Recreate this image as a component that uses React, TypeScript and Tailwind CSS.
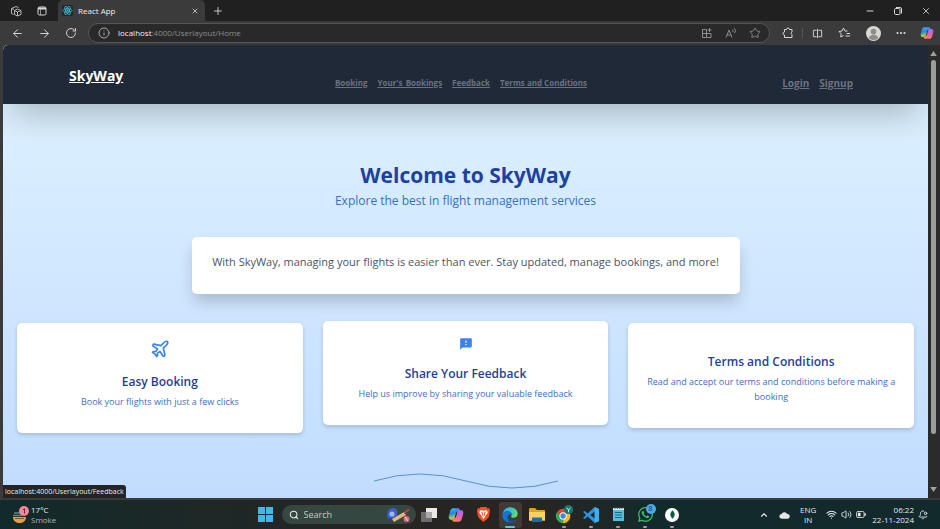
import React from "react";
import type { ReactNode } from "react";
import {
  ArrowLeft,
  ArrowRight,
  BellDot,
  ChevronUp,
  Ellipsis,
  Info,
  Minus,
  Plane,
  Plus,
  RotateCw,
  Search,
  Star,
  Volume2,
  Wifi,
  X,
} from "lucide-react";
import { MdFeedback } from "react-icons/md";
import { FaWhatsapp } from "react-icons/fa";

function IconButton({ label, children, className = "" }: { label: string; children: ReactNode; className?: string }) {
  return (
    <button type="button" aria-label={label} className={`flex shrink-0 items-center justify-center ${className}`}>
      {children}
    </button>
  );
}

function CopilotLogo({ id, className }: { id: string; className: string }) {
  return (
    <svg viewBox="0 0 24 24" className={className} aria-hidden="true">
      <defs>
        <linearGradient id={`${id}-a`} x1="0" y1="0" x2="0.3" y2="1">
          <stop offset="0" stopColor="#35c1f1" />
          <stop offset="0.5" stopColor="#2f7df0" />
          <stop offset="0.75" stopColor="#6bc46a" />
          <stop offset="1" stopColor="#f2c73c" />
        </linearGradient>
        <linearGradient id={`${id}-b`} x1="0.6" y1="0" x2="0.3" y2="1">
          <stop offset="0" stopColor="#a86bf0" />
          <stop offset="0.5" stopColor="#e85fb0" />
          <stop offset="1" stopColor="#f58a4c" />
        </linearGradient>
      </defs>
      <path d="M8 2h7c1.500 0 2.300 1 2.700 2.400L18.300 7H15c-2 0-2.800 1.200-3.300 3l-1.700 6c-.6 2-1.500 3-3.200 3H4.500C1 19 .6 16 1.500 12.500l1.800-6.300C4.200 3.300 5.600 2 8 2z" fill={`url(#${id}-a)`} />
      <path d="M16 22H9c-1.500 0-2.300-1-2.700-2.400L5.700 17H9c2 0 2.800-1.200 3.300-3L14 8c.6-2 1.500-3 3.200-3h2.300c3.500 0 3.900 3 3 6.500l-1.800 6.300C19.800 20.700 18.400 22 16 22z" fill={`url(#${id}-b)`} />
    </svg>
  );
}

function ReactLogo() {
  return (
    <svg viewBox="0 0 24 24" className="size-[11px] shrink-0" aria-hidden="true">
      <rect width="24" height="24" rx="4" fill="#1d2b33" />
      <g fill="none" stroke="#4fb9d6" strokeWidth="1.600">
        <ellipse cx="12" cy="12" rx="10" ry="4" />
        <ellipse cx="12" cy="12" rx="10" ry="4" transform="rotate(60 12 12)" />
        <ellipse cx="12" cy="12" rx="10" ry="4" transform="rotate(120 12 12)" />
      </g>
      <circle cx="12" cy="12" r="2.400" fill="#4fb9d6" />
    </svg>
  );
}

function TabStrip() {
  return (
    <header className="flex h-[21px] shrink-0 bg-[#202020] text-[#d6d6d6]">
      <div className="flex w-[58px] items-center gap-[15px] pl-[10px]">
        <IconButton label="Workspaces">
          <svg viewBox="0 0 12 12" className="size-[12px]" fill="none" stroke="#b4b4b4" strokeLinejoin="round" aria-hidden="true">
            <path d="M3.500 9.500 1.500 8.500V3.500L6 1.500l2.500 1M1.500 3.500 4 4.500M4.500 5.500 7.500 4l3.500 1.500v4L7.500 11l-3-1.500zM4.500 5.500l3 1.500L11 5.500M7.500 7v4" />
          </svg>
        </IconButton>
        <IconButton label="Tab actions">
          <svg viewBox="0 0 10 10" className="size-[10px]" fill="none" stroke="currentColor" aria-hidden="true">
            <rect x="1" y="1" width="8" height="8" rx="1.500" />
            <path d="M1 2.500h8" strokeWidth="2" />
            <path d="M3.500 3v6" strokeOpacity=".6" />
          </svg>
        </IconButton>
      </div>
      <div className="flex w-[147px] items-center rounded-t-[5px] bg-[#3b3b3b] pr-[6px] pl-[4px]">
        <ReactLogo />
        <span className="ml-[5px] flex-1 text-[8px] text-[#efefef]">React App</span>
        <IconButton label="Close tab"><X className="size-[8px]" strokeWidth={2.4} /></IconButton>
      </div>
      <IconButton label="New tab" className="ml-[7px]"><Plus className="size-[12px]" strokeWidth={1.8} /></IconButton>
      <div className="ml-auto flex items-center gap-[18px] pr-[9px]">
        <IconButton label="Minimize"><Minus className="size-[10px]" strokeWidth={2.4} /></IconButton>
        <IconButton label="Restore">
          <svg viewBox="0 0 10 10" className="size-[10px]" fill="none" stroke="currentColor" aria-hidden="true">
            <rect x="1.500" y="2.500" width="5.500" height="6" rx="1.200" />
            <path d="M3 1.500h4q1.500 0 1.500 1.500v4.500" />
          </svg>
        </IconButton>
        <IconButton label="Close window"><X className="size-[10px]" strokeWidth={2} /></IconButton>
      </div>
    </header>
  );
}

function Toolbar() {
  return (
    <div className="flex h-[24px] shrink-0 items-center bg-[#3b3b3b] text-[#d6d6d6]">
      <div className="flex w-[88px] shrink-0 items-center gap-[14px] pl-[11px]">
        <IconButton label="Back"><ArrowLeft className="size-[13px]" strokeWidth={1.8} /></IconButton>
        <IconButton label="Forward"><ArrowRight className="size-[13px]" strokeWidth={1.8} /></IconButton>
        <IconButton label="Refresh"><RotateCw className="size-[12px]" strokeWidth={1.9} /></IconButton>
      </div>
      <div className="flex h-[20px] flex-1 items-center rounded-full border border-[#565656] bg-[#292929] pr-[8px] pl-[9px] text-[#8d8d8d]">
        <Info className="size-[12px] text-[#b5b5b5]" strokeWidth={1.8} />
        <div className="ml-[8px] flex-1 text-[8px] leading-[12px]"><span className="text-[#f0f0f0]">localhost</span>:4000/Userlayout/Home</div>
        <div className="flex items-center gap-[12px]">
          <IconButton label="App available">
            <svg viewBox="0 0 12 12" className="size-[12px]" fill="none" stroke="currentColor" aria-hidden="true">
              <path d="M1.500 2.500h4v8h-4zM1.500 6.500h8.500v4H5.500M8.500 1v4M6.500 3h4" />
            </svg>
          </IconButton>
          <IconButton label="Read aloud">
            <svg viewBox="0 0 12 12" className="size-[12px]" fill="none" stroke="currentColor" aria-hidden="true">
              <path d="M1 10.500 4 3l3 7.500M2 8h4M7.500 2.500c.7.700.7 1.800 0 2.500M9.300 1.200c1.400 1.400 1.400 3.600 0 5" />
            </svg>
          </IconButton>
          <IconButton label="Add to favorites"><Star className="size-[12px]" strokeWidth={1.8} /></IconButton>
        </div>
      </div>
      <div className="flex shrink-0 items-center pr-px pl-[4px]">
        <IconButton label="Extensions" className="w-[28px]">
          <svg viewBox="0 0 12 12" className="size-[12px]" fill="none" stroke="currentColor" strokeLinejoin="round" aria-hidden="true">
            <path d="M2.500 2.500h2a1.500 1.500 0 0 1 3 0h2.500v2.500a1.400 1.400 0 0 0 0 2.500v3H2.500V8a1.400 1.400 0 0 1 0-3z" />
          </svg>
        </IconButton>
        <span className="h-[10px] w-px bg-[#555]" />
        <IconButton label="Split screen" className="w-[28px]">
          <svg viewBox="0 0 12 12" className="size-[11px]" fill="none" stroke="currentColor" aria-hidden="true">
            <path d="M5 2.500H1.500v7H5M7 2.500h3.500v7H7M6 1v10" />
          </svg>
        </IconButton>
        <IconButton label="Favorites" className="w-[28px]">
          <svg viewBox="0 0 14 12" className="h-[12px] w-[14px]" fill="none" stroke="currentColor" strokeLinejoin="round" aria-hidden="true">
            <path d="M9.500 4 7 4 5.500 1 4 4 1 4.500l2.200 2.200L2.700 10l2.800-1.500M8.500 6.500H12M7.500 9H12" />
          </svg>
        </IconButton>
        <IconButton label="Profile" className="w-[28px]">
          <svg viewBox="0 0 16 16" className="size-[15px]" aria-hidden="true">
            <circle cx="8" cy="8" r="8" fill="#d9d8d4" />
            <circle cx="8" cy="6" r="3" fill="#8e8d89" />
            <path d="M3 13c0-5 10-5 10 0-3 2.500-7 2.500-10 0z" fill="#8e8d89" />
          </svg>
        </IconButton>
        <IconButton label="Settings and more" className="w-[28px]"><Ellipsis className="size-[12px]" strokeWidth={2.4} /></IconButton>
        <IconButton label="Copilot" className="w-[24px]"><CopilotLogo id="sidebar" className="size-[14px]" /></IconButton>
      </div>
    </div>
  );
}

function SiteNav() {
  return (
    <nav className="relative grid h-[59px] shrink-0 grid-cols-[1fr_auto_1fr] items-center rounded-tl-[5px] bg-[#1f2937] pr-[75px] pl-[66px] font-bold text-gray-500 shadow-[0_17px_34px_-8px_rgba(0,0,0,0.25)]">
      <a href="#home" className="justify-self-start pt-[3px] text-[14px] leading-[18px] font-bold text-white underline">SkyWay</a>
      <div className="flex gap-[10px] pt-[16px] text-[8px] leading-[12px]">
        <a href="#booking" className="underline">Booking</a>
        <a href="#bookings" className="underline">Your's_Bookings</a>
        <a href="#feedback" className="underline">Feedback</a>
        <a href="#terms" className="underline">Terms and Conditions</a>
      </div>
      <div className="flex gap-[10px] justify-self-end pt-[16px] text-[10px] leading-[12px]">
        <a href="#login" className="underline">Login</a>
        <a href="#signup" className="underline">Signup</a>
      </div>
    </nav>
  );
}

function FeatureCard({ title, text, icon, lifted = false }: { title: string; text: string; icon?: ReactNode; lifted?: boolean }) {
  return (
    <article className={`flex-1 rounded-[5px] bg-white px-[14px] pt-[16px] pb-[24px] text-center shadow-[0_2px_4px_rgba(0,0,0,0.16)] ${lifted ? "-translate-y-0.5" : ""}`}>
      <div className="mb-[13px] flex justify-center text-[#3b82f0]">{icon}</div>
      <h2 className="text-[12px] leading-[20px] font-semibold text-[#263f95]">{title}</h2>
      <p className="mt-[2px] text-[9px] leading-[15px] text-[#3d6fbd]">{text}</p>
    </article>
  );
}

function Page() {
  return (
    <div className="relative flex min-w-0 flex-1 flex-col overflow-hidden rounded-tl-[5px] bg-linear-to-b from-[#e0f3fe] to-[#c1dcff]">
      <SiteNav />
      <main className="px-[14px] pt-[57px]">
        <h1 className="text-center text-[21px] leading-[28px] font-bold text-[#1e40a0]">Welcome to SkyWay</h1>
        <p className="mt-[3px] text-center text-[12px] leading-[17px] text-[#3b6fc0]">Explore the best in flight management services</p>
        <section className="mx-auto mt-[28px] max-w-[548px] rounded-[5px] bg-white pt-[16px] pb-[24px] text-center shadow-[0_9px_16px_-2px_rgba(0,0,0,0.2)]">
          <p className="text-[11px] leading-[17px] text-[#4b5563]">With SkyWay, managing your flights is easier than ever. Stay updated, manage bookings, and more!</p>
        </section>
        <section className="mt-[29px] flex items-start gap-[20px]">
          <FeatureCard title="Easy Booking" text="Book your flights with just a few clicks" icon={<Plane className="size-[20px]" strokeWidth={2} />} />
          <FeatureCard title="Share Your Feedback" text="Help us improve by sharing your valuable feedback" icon={<MdFeedback className="size-[14px]" />} lifted />
          <FeatureCard title="Terms and Conditions" text="Read and accept our terms and conditions before making a booking" />
        </section>
        <svg viewBox="0 0 184 20" className="mx-auto mt-[38px] h-[20px] w-[184px]" fill="none" stroke="#5a92c6" aria-hidden="true">
          <path d="M0 10Q46-4 92 10T184 10" />
        </svg>
      </main>
      <div className="absolute bottom-0 left-0 rounded-tr-[3px] bg-[#242424] px-[2px] text-[7px] leading-[13px] text-[#e8e8e8]">localhost:4000/Userlayout/Feedback</div>
    </div>
  );
}

function ScrollBar() {
  return (
    <div className="flex w-[12px] shrink-0 flex-col items-center bg-[#2b2b2b] py-[6px] pr-[2px]" aria-hidden="true">
      <svg viewBox="0 0 8 6" className="h-[5px] w-[7px]" fill="#a0a0a0"><path d="M4 0 8 6H0z" /></svg>
      <span className="mt-[4px] w-[5px] flex-[375] rounded-full bg-[#9d9d9d]" />
      <span className="flex-[53]" />
      <svg viewBox="0 0 8 6" className="h-[5px] w-[7px]" fill="#a0a0a0"><path d="M4 6 8 0H0z" /></svg>
    </div>
  );
}

function WeatherIcon() {
  return (
    <svg viewBox="0 0 18 20" className="h-[20px] w-[18px]" aria-hidden="true">
      <path d="M2 8h7M1 10.500h9" stroke="#5f8288" strokeWidth="1.500" />
      <path d="M1 12h13c0 8-13 8-13 0z" fill="#e5a045" />
      <path d="M3 13.500h9" stroke="#8a5426" />
      <circle cx="12" cy="6" r="5" fill="#f08a9b" />
      <path d="m11 5 1.500-1.200V8.500" stroke="#7d1f33" fill="none" />
    </svg>
  );
}

function SearchArt() {
  return (
    <svg viewBox="0 0 26 16" className="h-[16px] w-[26px]" aria-hidden="true">
      <path d="M2 9c0-5 2-8 6-8 4 0 5 3 4 8l-5 3H3z" fill="#3d5fc4" />
      <circle cx="7" cy="7" r="2.600" fill="#9ab7f0" />
      <path d="M1 11h7v2H2z" fill="#2b4590" />
      <path d="M7 12 19 5l2 3-12 7z" fill="#e5b779" />
      <path d="m19 6 5-3.500" stroke="#b94b3c" strokeWidth="1.600" />
      <circle cx="21.500" cy="12" r="3" fill="#e2677f" />
      <path d="m20 10 3 4" stroke="#fff" strokeWidth=".8" />
    </svg>
  );
}

function EdgeLogo() {
  return (
    <svg viewBox="0 0 24 24" className="size-[16px]" aria-hidden="true">
      <defs>
        <linearGradient id="edge-top" x1="0" y1="0.3" x2="1" y2="0.5">
          <stop offset="0" stopColor="#2ba8e8" />
          <stop offset="0.55" stopColor="#37c6c9" />
          <stop offset="1" stopColor="#6ae060" />
        </linearGradient>
      </defs>
      <path d="M.8 11C1.500 4.500 6.300.5 12.200.5c6.500 0 11.300 4.500 11.300 9.700 0 3.700-2.800 6.100-6.200 6.100-3 0-3.800-1.200-3.800-2 0-.7 1-1.200 1-3.100C14.500 8.500 11.500 6.500 8 6.500 4.500 6.500 2 8.500.8 11z" fill="url(#edge-top)" />
      <path d="M.5 12C1.300 8.800 4.500 6.500 8 6.500c3.500 0 6.500 2.200 6.500 4.500-5-1-7 4-4.500 7.500 2.300 3.200 7 3.500 12 .1C19.700 22 16.500 23.500 12 23.500 5.500 23.500.2 18.500.5 12z" fill="#1476cf" />
      <path d="M10.300 11.500C6.500 14 6.800 20.500 12 23.400c4 .3 8-1.600 10-4.800-5 3-9.500 2.300-11.500-.7-1.300-2-1.300-4.500-.2-6.400z" fill="#124f9c" />
    </svg>
  );
}

function ChromeLogo() {
  return (
    <svg viewBox="0 0 22 22" className="size-[20px]" aria-hidden="true">
      <g transform="translate(2 4)">
        <path d="M8 8 1.100 4A8 8 0 0 1 14.900 4z" fill="#ea4335" />
        <path d="M8 8 14.900 4A8 8 0 0 1 8 16z" fill="#fbbc05" />
        <path d="M8 8v8A8 8 0 0 1 1.100 4z" fill="#34a853" />
        <circle cx="8" cy="8" r="4" fill="#fff" />
        <circle cx="8" cy="8" r="3" fill="#4285f4" />
      </g>
      <circle cx="16" cy="5" r="5" fill="#13786a" />
      <path d="m14 3 2 2.500L18 3M16 5.500V8" stroke="#e7f5f2" fill="none" />
    </svg>
  );
}

function TaskbarApp({ label, children, running = false, active = false }: { label: string; children: ReactNode; running?: boolean; active?: boolean }) {
  return (
    <button type="button" aria-label={label} className="relative flex h-[26px] w-[27px] items-center justify-center">
      {active && <span className="absolute inset-x-[2px] inset-y-0 rounded-[3px] bg-[#423a36]" />}
      <span className="relative">{children}</span>
      {active && <span className="absolute bottom-0 h-[2px] w-[10px] rounded-full bg-[#6fb7e8]" />}
      {running && <span className="absolute bottom-0 h-[2px] w-[4px] rounded-full bg-[#99a09c]" />}
    </button>
  );
}

function Taskbar() {
  return (
    <footer className="grid h-[29px] shrink-0 grid-cols-[1fr_auto_1fr] items-center bg-linear-to-r from-[#122a2b] via-[#2a2420] via-55% to-[#122a2c] to-70% text-[8px] leading-[10px] text-[#e4e9e9]">
      <button type="button" className="flex items-center gap-px justify-self-start pl-[12px] text-left">
        <WeatherIcon />
        <span>
          <span className="block">17°C</span>
          <span className="block text-[#a8b4b4]">Smoke</span>
        </span>
      </button>
      <div className="flex items-center pl-[3px]">
        <IconButton label="Start" className="w-[24px] pr-[8px]">
          <svg viewBox="0 0 15 15" className="size-[15px]" fill="#41b8f2" aria-hidden="true">
            <path d="M0 0h7v7H0zM8 0h7v7H8zM0 8h7v7H0zM8 8h7v7H8z" />
          </svg>
        </IconButton>
        <label className="flex h-[19px] w-[134px] items-center rounded-full bg-[#364640] pr-[5px] pl-[7px]">
          <Search className="size-[10px] shrink-0" strokeWidth={2.6} aria-hidden="true" />
          <input type="text" aria-label="Search" placeholder="Search" className="ml-[5px] h-[16px] w-0 flex-1 bg-transparent text-[9px] leading-[16px] outline-none placeholder:text-[#c3cbc8]" />
          <SearchArt />
        </label>
        <TaskbarApp label="Task view">
          <svg viewBox="0 0 16 14" className="h-[14px] w-[16px]" aria-hidden="true">
            <path d="M5 0h11v10H5z" fill="#e9e9e9" />
            <path d="M0 4h11v10H0z" fill="#777" fillOpacity=".9" />
            <path d="M5 4h6v6H5z" fill="#aaa" />
          </svg>
        </TaskbarApp>
        <TaskbarApp label="Copilot"><CopilotLogo id="task" className="size-[16px]" /></TaskbarApp>
        <TaskbarApp label="Brave">
          <svg viewBox="0 0 14 16" className="h-[15px] w-[13px]" aria-hidden="true">
            <path d="M4 0h6l1.500 1.500L13 1l1 3-.8 5c-.5 2.500-3 4.500-6.200 7C3.800 13.500 1.300 11.500.8 9L0 4l1-3 1.500.5z" fill="#f2502a" />
            <path d="m3 4 2-.5 2 .5 2-.5 2 .5.500 2-2 3-2.500 4-2.500-4-2-3z" fill="#fff" />
            <path d="m4.500 5.500 1.500.5v3l1 1 1-1V6l1.500-.5" stroke="#f2502a" fill="none" />
          </svg>
        </TaskbarApp>
        <TaskbarApp label="Edge" active><EdgeLogo /></TaskbarApp>
        <TaskbarApp label="File Explorer">
          <svg viewBox="0 0 16 15" className="h-[15px] w-[16px]" aria-hidden="true">
            <path d="M0 2.500C0 1.500.5 1 1.500 1H6l2 2h7c.7 0 1 .4 1 1v9.500H0z" fill="#e0a02e" />
            <path d="M0 5h16v8.500H0z" fill="#fbd160" />
            <path d="M3 10.500h10V15H3z" fill="#1e6ca8" />
          </svg>
        </TaskbarApp>
        <TaskbarApp label="Chrome" running><ChromeLogo /></TaskbarApp>
        <TaskbarApp label="Visual Studio Code" running>
          <svg viewBox="0 0 24 24" className="size-[16px]" aria-hidden="true">
            <path d="M17.500 0 24 3v18l-6.500 3L7 14.300 2.500 18 0 16.700 4.500 12 0 7.300 2.500 6 7 9.700zM17.500 6.800 11 12l6.500 5.200z" fill="#2c96dd" fillRule="evenodd" />
            <path d="M17.500 0 24 3v18l-6.500 3z" fill="#40aef0" />
          </svg>
        </TaskbarApp>
        <TaskbarApp label="Notepad" running>
          <svg viewBox="0 0 13 15" className="h-[15px] w-[13px]" aria-hidden="true">
            <path d="M1 1h11v13H1z" fill="#57bdd8" />
            <path d="M1 1h11v2H1z" fill="#d1eef5" />
            <path d="M3 5.500h7M3 8h7M3 10.500h7" stroke="#196a8a" />
            <path d="M3 0v2M5.300 0v2M7.700 0v2M10 0v2" stroke="#37525c" />
          </svg>
        </TaskbarApp>
        <TaskbarApp label="WhatsApp" running>
          <FaWhatsapp className="size-[17px] text-[#35c66a]" />
          <span className="absolute -top-[2px] -right-[2px] size-[10px] rounded-full bg-[#4fabe8] text-center text-[7px] leading-[10px] text-[#12303f]">8</span>
        </TaskbarApp>
        <TaskbarApp label="MongoDB Compass" running>
          <span className="flex size-[14px] items-center justify-center rounded-full bg-white">
            <svg viewBox="0 0 6 10" className="h-[9px] w-[5px]" aria-hidden="true"><path d="M3 0c4 4 3 7 0 10C0 7-1 4 3 0z" fill="#0e5a43" /></svg>
          </span>
        </TaskbarApp>
      </div>
      <div className="flex items-center justify-self-end pr-[12px]">
        <IconButton label="Show hidden icons" className="mr-[10px]"><ChevronUp className="size-[10px]" strokeWidth={2.6} /></IconButton>
        <svg viewBox="0 0 12 8" className="mr-[10px] h-[8px] w-[11px]" fill="#e6e6e6" aria-hidden="true">
          <path d="M3 8a2.500 2.500 0 0 1-.3-5A3.500 3.500 0 0 1 9 3a2.500 2.500 0 0 1 .5 5z" />
        </svg>
        <button type="button" className="mr-[10px] text-center">
          <span className="block">ENG</span>
          <span className="block">IN</span>
        </button>
        <button type="button" aria-label="Network, sound and battery" className="mr-[6px] flex items-center gap-[4px]">
          <Wifi className="size-[11px]" strokeWidth={2.4} />
          <Volume2 className="size-[11px]" strokeWidth={2} />
          <svg viewBox="0 0 11 8" className="h-[7px] w-[10px]" aria-hidden="true">
            <rect x=".5" y=".5" width="8.500" height="7" rx="1.500" fill="none" stroke="#eee" />
            <path d="M2 2h3v4H2zM9.500 2.500H11v3H9.500z" fill="#eee" />
          </svg>
        </button>
        <button type="button" className="mr-[4px] text-right">
          <span className="block">06:22</span>
          <span className="block">22-11-2024</span>
        </button>
        <IconButton label="Notifications"><BellDot className="size-[10px]" strokeWidth={2.2} /></IconButton>
      </div>
    </footer>
  );
}

export default function App() {
  return (
    <div className="flex h-screen flex-col overflow-hidden bg-[#3b3b3b] font-['Open_Sans','Noto_Sans',sans-serif]">
      <TabStrip />
      <Toolbar />
      <div className="flex min-h-0 flex-1 pb-[2px] pl-[3px]">
        <Page />
        <ScrollBar />
      </div>
      <Taskbar />
    </div>
  );
}
